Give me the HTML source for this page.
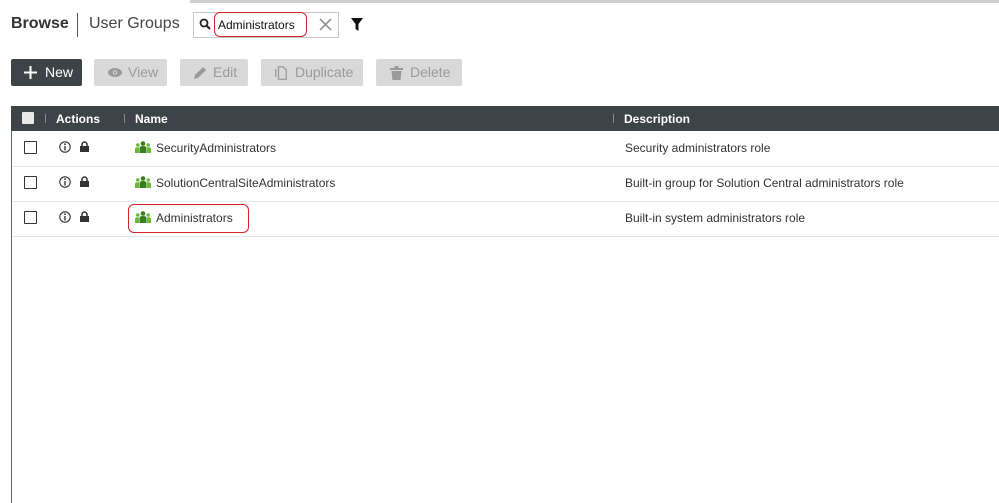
<!DOCTYPE html><html><head><style>
body{margin:0;width:999px;height:503px;background:#fff;font-family:"Liberation Sans",sans-serif;position:relative;overflow:hidden;color:#333}
.a{position:absolute}
.btn{position:absolute;top:59px;height:27px;border-radius:2px;background:#d9d9d9;color:#9a9a9a;font-size:14px;line-height:27px;box-sizing:border-box}
.btn svg{position:absolute;top:7px}
.btn span{position:absolute;top:0}
.row{position:absolute;left:12px;width:987px;height:35px;border-bottom:1px solid #e6e6e6;font-size:12px;color:#333}
.row span{position:absolute;top:10px}
.cb{position:absolute;left:12px;top:10px;width:13px;height:13px;border:1.5px solid #333;border-radius:1px;box-sizing:border-box}
.row svg{position:absolute}
</style></head><body>
<div class="a" style="left:190px;top:0;width:809px;height:3px;background:#cfcfcf"></div>
<div class="a" style="left:11px;top:15px;font-size:16px;font-weight:bold;color:#333">Browse</div>
<div class="a" style="left:77px;top:13px;width:1px;height:24px;background:#555"></div>
<div class="a" style="left:89px;top:15px;font-size:16px;color:#444">User Groups</div>
<div class="a" style="left:193px;top:12px;width:146px;height:26px;border:1px solid #c8c8c8;box-sizing:border-box"></div>
<svg class="a" style="left:199px;top:18px" width="13" height="13" viewBox="0 0 13 13"><circle cx="5" cy="5" r="3.5" fill="none" stroke="#222" stroke-width="1.8"/><path d="M7.5 7.5L11 11" stroke="#222" stroke-width="2"/></svg>
<div class="a" style="left:214px;top:12px;width:93px;height:25px;border:1.5px solid #d9232a;border-radius:6px;box-sizing:border-box"></div>
<div class="a" style="left:218px;top:18px;font-size:12px;color:#111">Administrators</div>
<svg class="a" style="left:319px;top:18px" width="13" height="13"><path d="M1 1L12 12M12 1L1 12" stroke="#888" stroke-width="1.5"/></svg>
<svg class="a" style="left:351px;top:18px" width="12" height="13"><path d="M0 0H12L7.5 6V13L4.5 11V6Z" fill="#111"/></svg>
<div class="btn" style="left:11px;width:71px;background:#3d4447;color:#fff"><svg style="left:13px" width="13" height="13"><path d="M6.5 0V13M0 6.5H13" stroke="#fff" stroke-width="2"/></svg><span style="left:34px">New</span></div>
<div class="btn" style="left:94px;width:73px"><svg style="left:14px;top:9px" width="14" height="9"><ellipse cx="7" cy="4.5" rx="7" ry="4.5" fill="#9a9a9a"/><circle cx="7" cy="4.5" r="2.2" fill="#d9d9d9"/><circle cx="7" cy="4.5" r="1.2" fill="#9a9a9a"/></svg><span style="left:34px">View</span></div>
<div class="btn" style="left:180px;width:68px"><svg style="left:13px" width="14" height="14"><path d="M1 13L2 9L10 1L13 4L5 12Z" fill="#9a9a9a"/></svg><span style="left:33px">Edit</span></div>
<div class="btn" style="left:261px;width:102px"><svg style="left:14px" width="12" height="14"><path d="M3.5 0.75H8L11.25 4V13.25H3.5Z M0.75 3V11" fill="none" stroke="#9a9a9a" stroke-width="1.3"/></svg><span style="left:34px">Duplicate</span></div>
<div class="btn" style="left:376px;width:86px"><svg style="left:14px" width="13" height="14"><path d="M0 2H13V4H0Z M4.5 0H8.5V2H4.5Z M1.5 5H11.5L10.5 14H2.5Z" fill="#9a9a9a"/></svg><span style="left:34px">Delete</span></div>
<div class="a" style="left:11px;top:106px;width:988px;height:25px;background:#3d4447;color:#fff;font-size:12px;font-weight:bold">
<div class="a" style="left:11px;top:6px;width:12px;height:12px;background:#e8e8e8;border-radius:1px"></div>
<div class="a" style="left:34px;top:8px;width:1px;height:9px;background:#888"></div>
<div class="a" style="left:45px;top:6px">Actions</div>
<div class="a" style="left:113px;top:8px;width:1px;height:9px;background:#888"></div>
<div class="a" style="left:124px;top:6px">Name</div>
<div class="a" style="left:602px;top:8px;width:1px;height:9px;background:#888"></div>
<div class="a" style="left:613px;top:6px">Description</div>
</div>
<div class="a" style="left:11px;top:131px;width:1px;height:372px;background:#666"></div>
<!-- icon templates repeated -->
<div class="row" style="top:131px"><div class="cb"></div>
<svg style="left:47px;top:10px" width="12" height="12"><circle cx="6" cy="6" r="5.2" fill="none" stroke="#333" stroke-width="1.1"/><path d="M6 5V9.5" stroke="#333" stroke-width="1.4"/><circle cx="6" cy="3.2" r="0.9" fill="#333"/></svg>
<svg style="left:68px;top:10px" width="9" height="11"><path d="M2 5V3.5A2.5 2.5 0 0 1 7 3.5V5" fill="none" stroke="#333" stroke-width="1.5"/><rect x="0" y="5" width="9" height="6" fill="#333"/></svg>
<svg style="left:123px;top:10px" width="16" height="12"><circle cx="8" cy="2.5" r="2.3" fill="#3a7d1f"/><path d="M4.5 12V7Q4.5 5 8 5Q11.5 5 11.5 7V12Z" fill="#3a7d1f"/><circle cx="2.8" cy="4" r="1.8" fill="#6bb83a"/><path d="M0 12V8Q0 6.3 2.8 6.3Q4 6.3 4 7V12Z" fill="#6bb83a"/><circle cx="13.2" cy="4" r="1.8" fill="#6bb83a"/><path d="M16 12V8Q16 6.3 13.2 6.3Q12 6.3 12 7V12Z" fill="#6bb83a"/></svg>
<span style="left:144px">SecurityAdministrators</span><span style="left:613px">Security administrators role</span></div>
<div class="row" style="top:166px"><div class="cb"></div>
<svg style="left:47px;top:10px" width="12" height="12"><circle cx="6" cy="6" r="5.2" fill="none" stroke="#333" stroke-width="1.1"/><path d="M6 5V9.5" stroke="#333" stroke-width="1.4"/><circle cx="6" cy="3.2" r="0.9" fill="#333"/></svg>
<svg style="left:68px;top:10px" width="9" height="11"><path d="M2 5V3.5A2.5 2.5 0 0 1 7 3.5V5" fill="none" stroke="#333" stroke-width="1.5"/><rect x="0" y="5" width="9" height="6" fill="#333"/></svg>
<svg style="left:123px;top:10px" width="16" height="12"><circle cx="8" cy="2.5" r="2.3" fill="#3a7d1f"/><path d="M4.5 12V7Q4.5 5 8 5Q11.5 5 11.5 7V12Z" fill="#3a7d1f"/><circle cx="2.8" cy="4" r="1.8" fill="#6bb83a"/><path d="M0 12V8Q0 6.3 2.8 6.3Q4 6.3 4 7V12Z" fill="#6bb83a"/><circle cx="13.2" cy="4" r="1.8" fill="#6bb83a"/><path d="M16 12V8Q16 6.3 13.2 6.3Q12 6.3 12 7V12Z" fill="#6bb83a"/></svg>
<span style="left:144px">SolutionCentralSiteAdministrators</span><span style="left:613px">Built-in group for Solution Central administrators role</span></div>
<div class="row" style="top:201px"><div class="cb"></div>
<svg style="left:47px;top:10px" width="12" height="12"><circle cx="6" cy="6" r="5.2" fill="none" stroke="#333" stroke-width="1.1"/><path d="M6 5V9.5" stroke="#333" stroke-width="1.4"/><circle cx="6" cy="3.2" r="0.9" fill="#333"/></svg>
<svg style="left:68px;top:10px" width="9" height="11"><path d="M2 5V3.5A2.5 2.5 0 0 1 7 3.5V5" fill="none" stroke="#333" stroke-width="1.5"/><rect x="0" y="5" width="9" height="6" fill="#333"/></svg>
<svg style="left:123px;top:10px" width="16" height="12"><circle cx="8" cy="2.5" r="2.3" fill="#3a7d1f"/><path d="M4.5 12V7Q4.5 5 8 5Q11.5 5 11.5 7V12Z" fill="#3a7d1f"/><circle cx="2.8" cy="4" r="1.8" fill="#6bb83a"/><path d="M0 12V8Q0 6.3 2.8 6.3Q4 6.3 4 7V12Z" fill="#6bb83a"/><circle cx="13.2" cy="4" r="1.8" fill="#6bb83a"/><path d="M16 12V8Q16 6.3 13.2 6.3Q12 6.3 12 7V12Z" fill="#6bb83a"/></svg>
<span style="left:144px">Administrators</span><span style="left:613px">Built-in system administrators role</span></div>
<div class="a" style="left:128px;top:204px;width:121px;height:29px;border:1.5px solid #d9232a;border-radius:6px;box-sizing:border-box"></div>
</body></html>
